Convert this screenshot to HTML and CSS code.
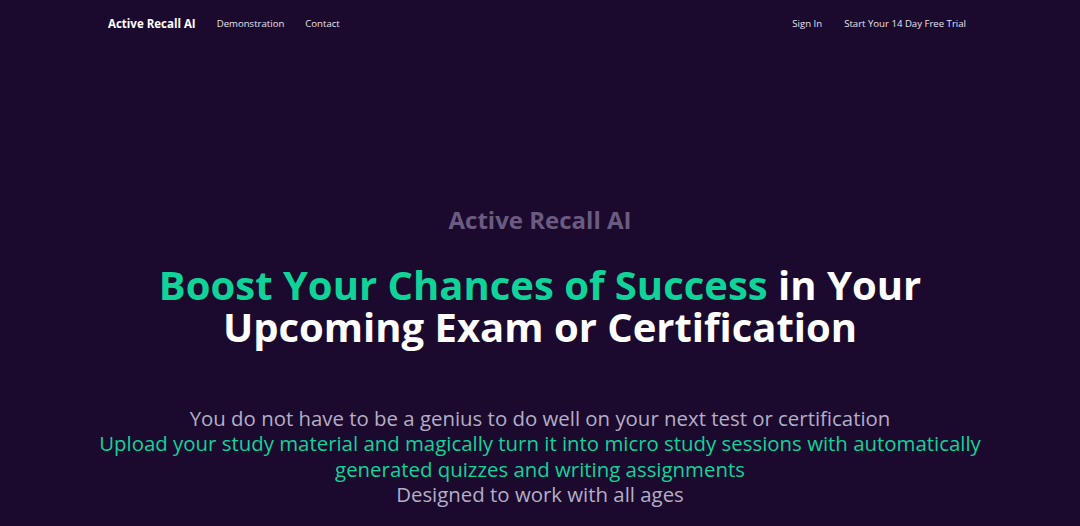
FILE: index.html
```html
<!DOCTYPE html>
<html lang="en">
<head>
<meta charset="utf-8">
<title>Active Recall AI</title>
<link rel="stylesheet" href="styles.css">
</head>
<body>
<header class="nav">
  <div class="nav-left">
    <a class="brand" href="#">Active Recall AI</a>
    <a class="link" href="#">Demonstration</a>
    <a class="link" href="#">Contact</a>
  </div>
  <div class="nav-right">
    <a class="link" href="#">Sign In</a>
    <a class="link" href="#">Start Your 14 Day Free Trial</a>
  </div>
</header>
<main class="hero">
  <p class="eyebrow">Active Recall AI</p>
  <h1 class="headline"><span class="line"><span class="accent">Boost Your Chances of Success</span> in Your</span><span class="line">Upcoming Exam or Certification</span></h1>
  <div class="copy">
    <p class="muted">You do not have to be a genius to do well on your next test or certification</p>
    <p class="green">Upload your study material and magically turn it into micro study sessions with automatically generated quizzes and writing assignments</p>
    <p class="muted">Designed to work with all ages</p>
  </div>
</main>
</body>
</html>
```
FILE: styles.css
```css
html, body {
  margin: 0;
  padding: 0;
  background: #1b0a2e;
  font-family: "Open Sans", "Noto Sans", sans-serif;
}
a { text-decoration: none; }
.nav {
  display: flex;
  justify-content: space-between;
  align-items: center;
  padding: 14px 114px 0 108px;
  height: 18px;
}
.nav-left, .nav-right {
  display: flex;
  align-items: center;
  gap: 22px;
}
.nav-left { gap: 21px; }
.brand {
  color: #ffffff;
  font-weight: 700;
  font-size: 11.5px;
}
.link {
  color: #e6e2ee;
  font-size: 9.6px;
}
.hero {
  text-align: center;
  padding-top: 173px;
}
.eyebrow {
  margin: 0;
  color: #6b5b80;
  font-size: 24px;
  font-weight: 700;
  line-height: 30px;
}
.headline {
  margin: 29px 0 0;
  color: #ffffff;
  font-size: 40px;
  line-height: 42px;
  font-weight: 700;
}
.line { display: block; }
.accent { color: #10d39a; }
.copy {
  margin: 58px auto 0;
  max-width: 900px;
  font-size: 20.4px;
  line-height: 25.3px;
}
.copy p { margin: 0; }
.muted { color: #b4aec8; }
.green { color: #10d39a; }
```
